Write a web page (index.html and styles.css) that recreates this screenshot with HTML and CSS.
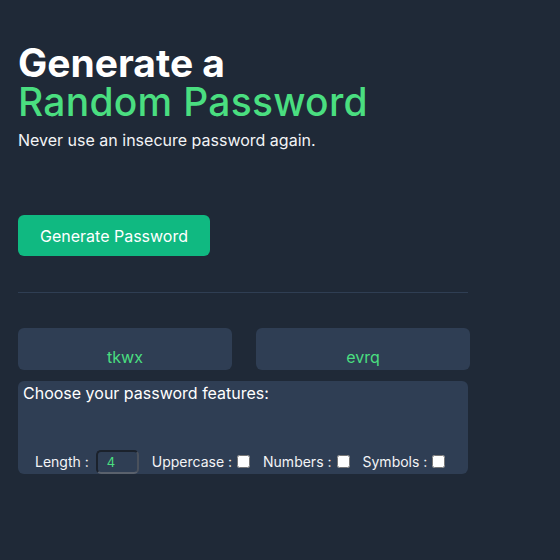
FILE: index.html
```html
<!DOCTYPE html>
<html lang="en">
<head>
<meta charset="utf-8">
<title>Password Generator</title>
<link rel="stylesheet" href="styles.css">
</head>
<body>
<main class="app">
  <h1 class="title"><span class="title-top">Generate a</span><span class="title-accent">Random Password</span></h1>
  <p class="subtitle">Never use an insecure password again.</p>
  <button class="generate-btn" type="button">Generate Password</button>
  <hr class="divider">
  <div class="results">
    <div class="result-card">tkwx</div>
    <div class="result-card">evrq</div>
  </div>
  <section class="features">
    <p class="features-title">Choose your password features:</p>
    <div class="options">
      <label class="option">Length :<input class="length-input" type="number" value="4"></label>
      <label class="option">Uppercase :<input class="check" type="checkbox"></label>
      <label class="option">Numbers :<input class="check" type="checkbox"></label>
      <label class="option">Symbols :<input class="check" type="checkbox"></label>
    </div>
  </section>
</main>
</body>
</html>
```
FILE: styles.css
```css
* { box-sizing: border-box; }
html, body { margin: 0; padding: 0; }
body {
  background: #1f2937;
  font-family: Inter, "Noto Sans", sans-serif;
  color: #ffffff;
  width: 560px;
  height: 560px;
}
.app {
  padding: 43px 0 0 18px;
  display: flex;
  flex-direction: column;
  align-items: flex-start;
}
.title {
  margin: 0;
  font-size: 39px;
  line-height: 39px;
  display: flex;
  flex-direction: column;
}
.title-top { font-weight: 700; color: #ffffff; }
.title-accent { font-weight: 500; color: #4ade80; letter-spacing: 0.25px; }
.subtitle {
  margin: 7px 0 0;
  font-size: 16px;
  line-height: 24px;
  color: #f3f4f6;
}
.generate-btn {
  margin-top: 63px;
  height: 41px;
  padding: 0 22px;
  background: #10b981;
  border: none;
  border-radius: 6px;
  color: #ffffff;
  font-family: inherit;
  font-size: 16px;
}
.divider {
  margin: 36px 0 0;
  width: 450px;
  height: 1px;
  border: none;
  background: #2f3e53;
}
.results {
  margin-top: 35px;
  display: flex;
  gap: 24px;
}
.result-card {
  width: 214px;
  height: 42px;
  background: #2f3e54;
  border-radius: 6px;
  color: #4ade80;
  font-size: 16px;
  line-height: 24px;
  text-align: center;
  padding-top: 17px;
}
.features {
  margin-top: 11px;
  width: 450px;
  height: 93px;
  background: #2f3e54;
  border-radius: 6px;
  padding: 4px 5px 0;
  display: flex;
  flex-direction: column;
  justify-content: space-between;
}
.features-title {
  margin: 0;
  font-size: 16px;
  line-height: 16px;
}
.options {
  display: flex;
  align-items: center;
  padding: 0 0 1px 12px;
  gap: 13px;
  font-size: 14px;
  color: #f3f4f6;
}
.option {
  display: flex;
  align-items: center;
}
.length-input {
  width: 43px;
  height: 24px;
  margin: 1px 0 -1px 7px;
  background: transparent;
  border: 2px solid #1b222c;
  border-bottom-color: #5a616c;
  border-right-color: #4a515c;
  border-radius: 5px;
  color: #4ade80;
  font-family: inherit;
  font-size: 13px;
  padding: 0 0 0 9px;
  -moz-appearance: textfield;
}
.length-input::-webkit-inner-spin-button,
.length-input::-webkit-outer-spin-button { -webkit-appearance: none; margin: 0; }
.check {
  width: 13px;
  height: 13px;
  margin: 0 0 0 5px;
}
```
